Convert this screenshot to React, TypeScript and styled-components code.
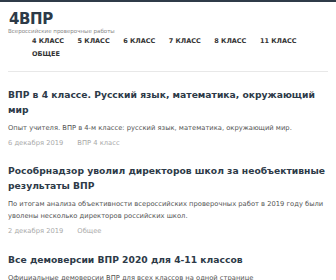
import React from 'react';
import styled, { createGlobalStyle } from 'styled-components';

const GlobalStyle = createGlobalStyle`
  html, body {
    margin: 0;
    padding: 0;
    background: #fff;
  }
  body {
    font-family: 'DejaVu Sans', Verdana, sans-serif;
    color: #333;
  }
`;

type Post = {
  title: string;
  excerpt: string;
  date: string;
  category: string;
};

const posts: Post[] = [
  {
    title: 'ВПР в 4 классе. Русский язык, математика, окружающий мир',
    excerpt: 'Опыт учителя. ВПР в 4-м классе: русский язык, математика, окружающий мир.',
    date: '6 декабря 2019',
    category: 'ВПР 4 класс'
  },
  {
    title: 'Рособрнадзор уволил директоров школ за необъективные результаты ВПР',
    excerpt: 'По итогам анализа объективности всероссийских проверочных работ в 2019 году были уволены несколько директоров российских школ.',
    date: '2 декабря 2019',
    category: 'Общее'
  },
  {
    title: 'Все демоверсии ВПР 2020 для 4-11 классов',
    excerpt: 'Официальные демоверсии ВПР для всех классов на одной странице',
    date: '1 декабря 2019',
    category: 'Общее'
  }
];

const menu = ['4 класс', '5 класс', '6 класс', '7 класс', '8 класс', '11 класс', 'Общее'];

const Page = styled.div`
  border-top: 2px solid #2f3b48;
  padding: 0 8px;
`;

const Header = styled.header`
  padding-top: 10px;
  padding-bottom: 10px;
  border-bottom: 1px solid #e8e8e8;
`;

const Logo = styled.div`
  padding-left: 1px;
  font-weight: bold;
  font-size: 15px;
  line-height: 15px;
  letter-spacing: -0.4px;
  color: #2d3a48;
`;

const Tagline = styled.div`
  font-size: 5.5px;
  line-height: 8px;
  color: #888;
`;

const Nav = styled.nav`
  display: flex;
  flex-wrap: wrap;
  column-gap: 13.5px;
  padding-left: 24px;
`;

const NavItem = styled.a`
  font-size: 6.5px;
  font-weight: bold;
  line-height: 13px;
  text-transform: uppercase;
  color: #333;
  text-decoration: none;
`;

const Article = styled.article`
  padding-top: 14.5px;
`;

const Title = styled.h2`
  margin: 0;
  font-size: 9.2px;
  font-weight: bold;
  line-height: 15px;
  color: #2d3a48;
`;

const Excerpt = styled.p`
  margin: 5px 0 0;
  font-size: 6.75px;
  line-height: 12px;
  color: #555;
`;

const Meta = styled.div`
  display: flex;
  gap: 14px;
  margin-top: 3px;
  font-size: 6.75px;
  line-height: 12px;
  color: #aaa;
`;

export default function App() {
  return (
    <Page>
      <GlobalStyle />
      <Header>
        <Logo>4ВПР</Logo>
        <Tagline>Всероссийские проверочные работы</Tagline>
        <Nav>
          {menu.map((m) => (
            <NavItem key={m} href="#">{m}</NavItem>
          ))}
        </Nav>
      </Header>
      {posts.map((p) => (
        <Article key={p.title}>
          <Title>{p.title}</Title>
          <Excerpt>{p.excerpt}</Excerpt>
          <Meta>
            <span>{p.date}</span>
            <span>{p.category}</span>
          </Meta>
        </Article>
      ))}
    </Page>
  );
}
